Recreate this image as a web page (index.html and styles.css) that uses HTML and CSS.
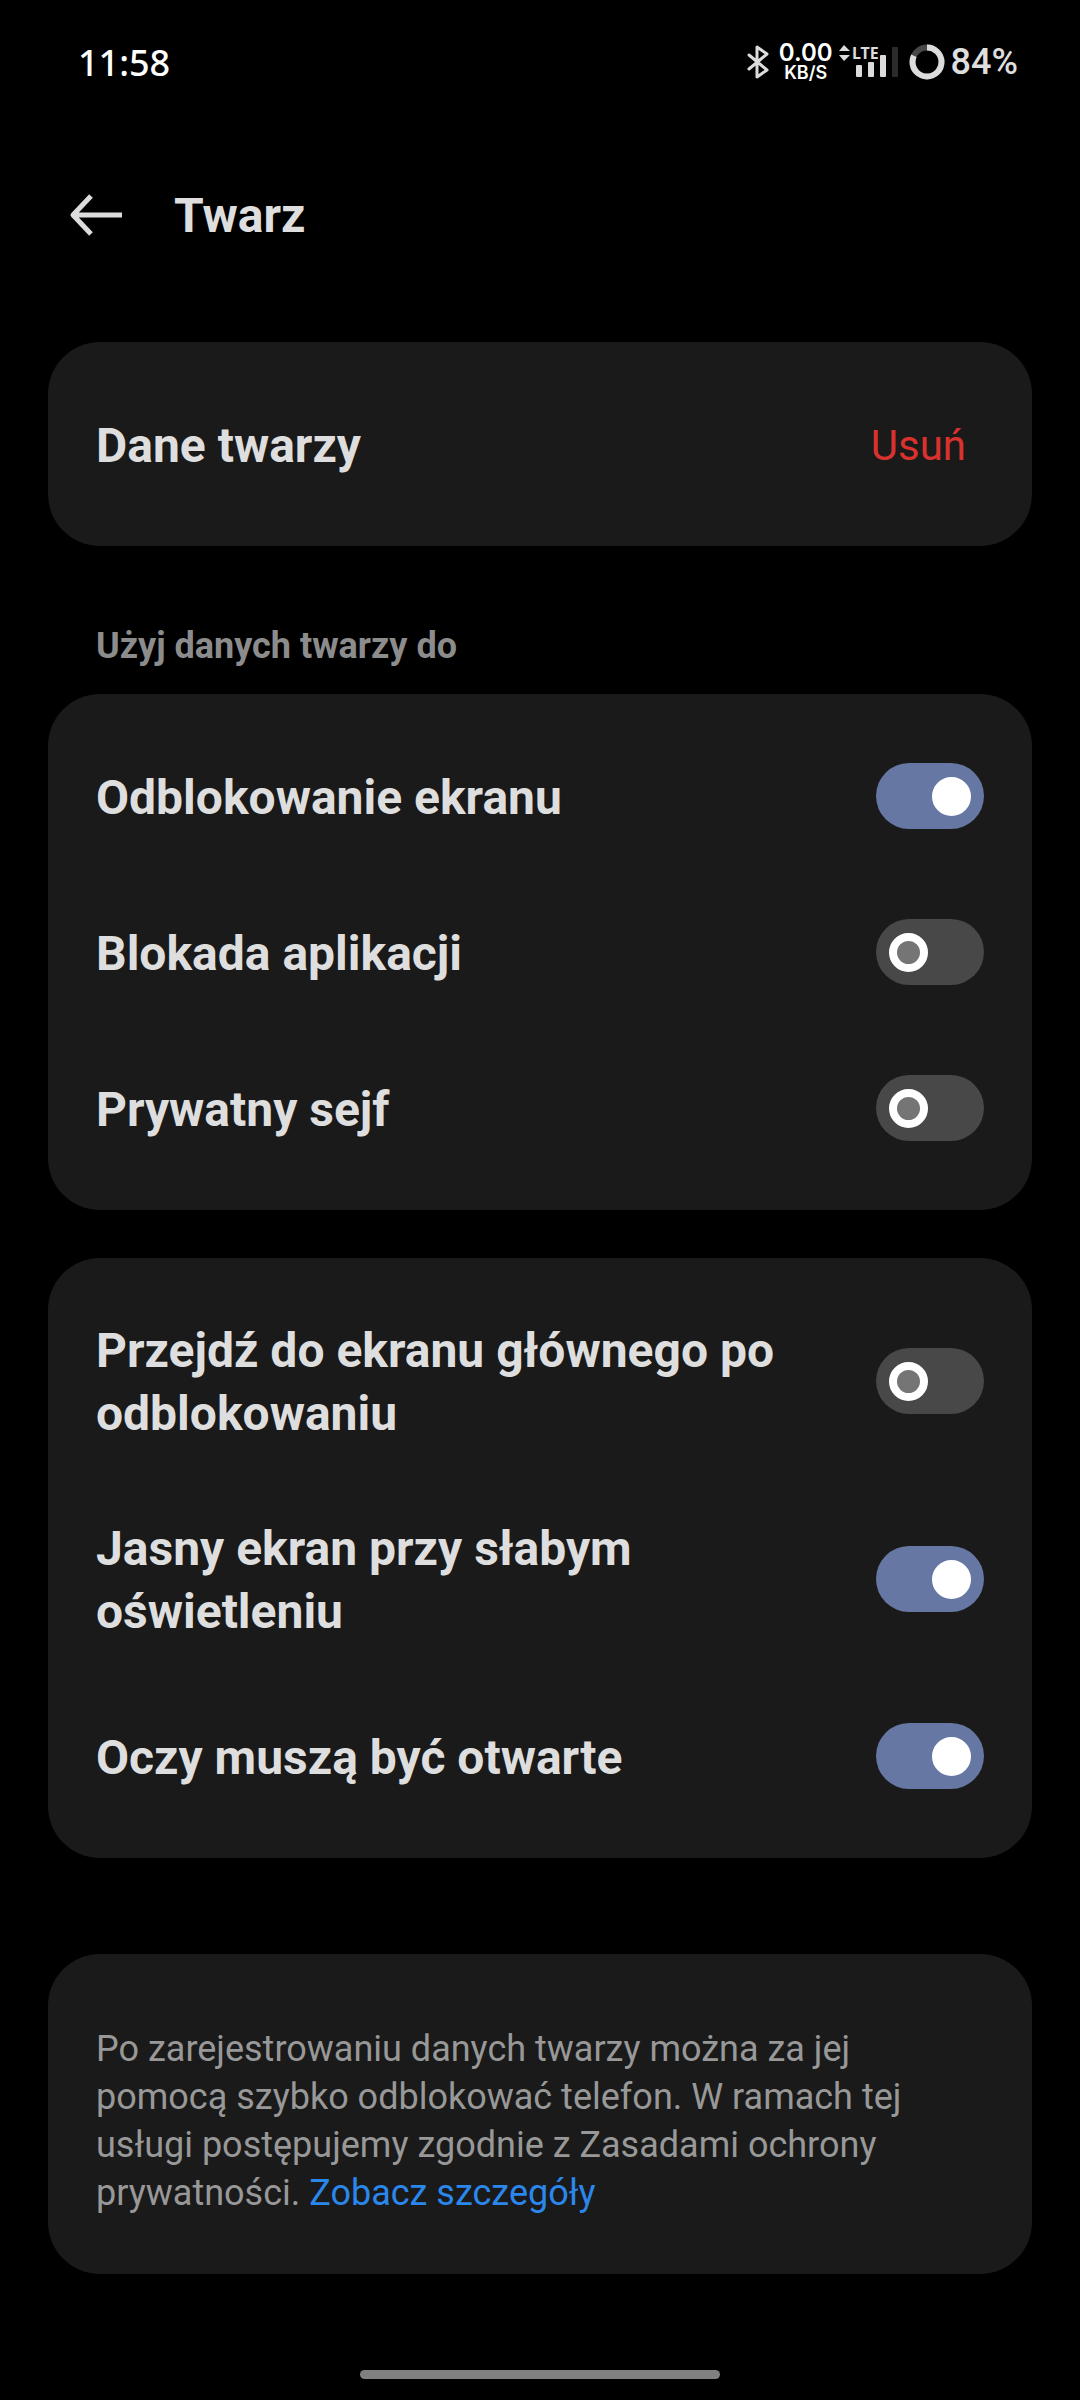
FILE: index.html
```html
<!doctype html>
<html lang="pl">
	<head>
		<meta charset="UTF-8" />
		<meta name="viewport" content="width=device-width, initial-scale=1.0" />
		<title>Twarz</title>
		<link rel="stylesheet" href="styles.css">
	</head>
	<body>
		<div class="status-bar">
			<span class="clock">11:58</span>
			<div class="status-icons">
				<svg class="bluetooth" width="22" height="34" viewBox="0 0 22 34" fill="none" stroke="#dcdcdc" stroke-width="3" stroke-linejoin="round" stroke-linecap="round">
					<path d="M2 10L20 25L10 32V2L20 9L2 24" />
				</svg>
				<div class="net-speed">
					<span class="speed-value">0.00</span>
					<span class="speed-unit">KB/S</span>
				</div>
				<svg class="signal" width="60" height="40" viewBox="0 -2 60 40" fill="#dcdcdc">
					<path d="M0 7L5 1L11 7ZM0 11H11L5 17Z" />
					<text class="lte" x="13" y="15">LTE</text>
					<rect x="17" y="21" width="6" height="12" rx="1" />
					<rect x="29" y="18" width="6" height="15" rx="1" />
					<rect x="41" y="11" width="6" height="22" rx="1" />
					<rect x="53" y="3" width="6" height="30" rx="1" fill="#2b2b2b" />
				</svg>
				<svg class="battery" width="36" height="36" viewBox="0 0 36 36" fill="none" stroke-width="6">
					<circle cx="18" cy="18" r="14.5" stroke="#484848" />
					<circle cx="18" cy="18" r="14.5" stroke="#dcdcdc" pathLength="100" stroke-dasharray="82 18" transform="rotate(-90 18 18)" />
				</svg>
				<span class="battery-level">84%</span>
			</div>
		</div>

		<header class="header">
			<button type="button" class="back" aria-label="Wstecz">
				<svg width="54" height="42" viewBox="0 0 54 42" fill="none" stroke="#dcdcdc" stroke-width="5">
					<path d="M53 21H4M22 2L4 21L22 40" stroke-linejoin="round" />
				</svg>
			</button>
			<h1>Twarz</h1>
		</header>

		<main>
			<section class="card">
				<div class="row">
					<span class="row-title">Dane twarzy</span>
					<button type="button" class="remove">Usuń</button>
				</div>
			</section>

			<h2>Użyj danych twarzy do</h2>
			<section class="card">
				<div class="row">
					<label class="row-title" for="unlock">Odblokowanie ekranu</label>
					<input type="checkbox" class="switch" id="unlock" checked>
				</div>
				<div class="row">
					<label class="row-title" for="appLock">Blokada aplikacji</label>
					<input type="checkbox" class="switch" id="appLock">
				</div>
				<div class="row">
					<label class="row-title" for="safe">Prywatny sejf</label>
					<input type="checkbox" class="switch" id="safe">
				</div>
			</section>

			<section class="card options">
				<div class="row">
					<label class="row-title" for="goHome">Przejdź do ekranu głównego po odblokowaniu</label>
					<input type="checkbox" class="switch" id="goHome">
				</div>
				<div class="row">
					<label class="row-title" for="brightScreen">Jasny ekran przy słabym oświetleniu</label>
					<input type="checkbox" class="switch" id="brightScreen" checked>
				</div>
				<div class="row">
					<label class="row-title" for="eyesOpen">Oczy muszą być otwarte</label>
					<input type="checkbox" class="switch" id="eyesOpen" checked>
				</div>
			</section>

			<section class="card info">
				<p>Po zarejestrowaniu danych twarzy można za jej pomocą szybko odblokować telefon. W ramach tej usługi postępujemy zgodnie z Zasadami ochrony prywatności. <a href="#">Zobacz szczegóły</a></p>
			</section>
		</main>

		<div class="gesture-bar"></div>
	</body>
</html>
```
FILE: styles.css
```css
*, *::before {
	box-sizing: border-box;
}
body {
	margin: 0;
	min-height: 100vh;
	display: flex;
	flex-direction: column;
	background-color: #000;
	color: #dedede;
	font-family: Roboto, sans-serif;
}
button {
	padding: 0;
	border: none;
	background: none;
	font: inherit;
	cursor: pointer;
}
svg {
	display: block;
}

/* status bar */
.status-bar {
	height: 124px;
	padding: 0 62px 0 78px;
	display: flex;
	align-items: center;
	justify-content: space-between;
	font-size: 36px;
	font-weight: 500;
}
.clock {
	color: #fff;
	font-family: "Noto Sans", sans-serif;
}
.status-icons {
	display: flex;
	align-items: center;
}
.net-speed {
	display: flex;
	flex-direction: column;
	align-items: center;
	margin: 0 6px 0 10px;
	color: #fff;
	font-family: Inter, sans-serif;
	font-weight: 600;
}
.speed-value {
	font-size: 24px;
	line-height: 22px;
}
.speed-unit {
	font-size: 18px;
	line-height: 18px;
}
.lte {
	font-family: "Noto Sans", sans-serif;
	font-size: 16px;
	font-weight: 700;
}
.battery {
	margin: 0 6px 0 10px;
}

/* header */
.header {
	height: 182px;
	padding: 0 69px;
	display: flex;
	align-items: center;
	gap: 51px;
}
h1 {
	margin: 0;
	font-size: 48px;
	font-weight: 700;
	line-height: 63px;
}

/* settings */
main {
	padding: 36px 48px;
}
.card {
	padding: 24px 48px;
	border-radius: 52px;
	background-color: #1a1a1a;
}
.row {
	min-height: 156px;
	padding: 35px 0;
	display: flex;
	align-items: center;
	justify-content: space-between;
	gap: 96px;
}
.row-title {
	padding-top: 2px;
	font-size: 48px;
	font-weight: 700;
	line-height: 63px;
}
.remove {
	padding: 2px 18px 0;
	color: #d9322e;
	font-size: 42px;
}
h2 {
	margin: 76px 48px 24px;
	color: #8c8c8c;
	font-size: 36px;
	font-weight: 700;
	line-height: 48px;
}
.options {
	margin: 48px 0 96px;
}

/* switch */
.switch {
	appearance: none;
	flex: none;
	width: 108px;
	height: 66px;
	margin: 0;
	padding: 0 13px;
	display: flex;
	align-items: center;
	border-radius: 33px;
	background-color: #484848;
	cursor: pointer;
}
.switch::before {
	content: "";
	width: 39px;
	height: 39px;
	border: 8px solid #fff;
	border-radius: 50%;
	background-color: #757575;
}
.switch:checked {
	justify-content: flex-end;
	background-color: #6677a3;
}
.switch:checked::before {
	background-color: #fff;
}

.info {
	padding: 71px 48px 57px;
}
.info p {
	margin: 0;
	color: #989898;
	font-size: 36px;
	line-height: 48px;
}
.info a {
	color: #2b87ec;
	text-decoration: none;
}

.gesture-bar {
	width: 33.33%;
	height: 9px;
	margin: auto auto 21px;
	border-radius: 5px;
	background-color: #808080;
}
```
